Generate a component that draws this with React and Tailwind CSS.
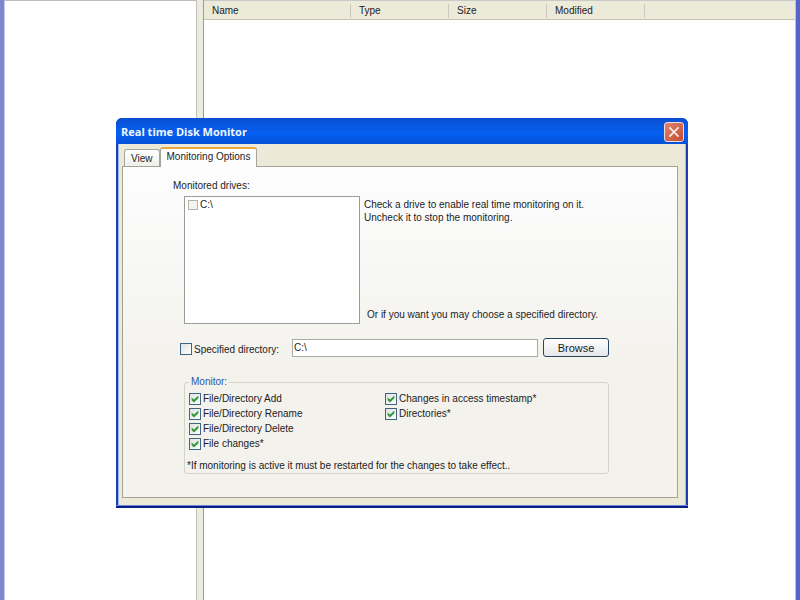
import { useState } from 'react';
import clsx from 'clsx';

const COLUMNS = ['Name', 'Type', 'Size', 'Modified'];

const TABS = ['View', 'Monitoring Options'];

const EVENTS = [
  ['File/Directory Add', 'File/Directory Rename', 'File/Directory Delete', 'File changes*'],
  ['Changes in access timestamp*', 'Directories*'],
];

function CheckBox({ label, flat, defaultChecked }) {
  return (
    <label className="flex h-[15px] items-center gap-[2px] whitespace-nowrap">
      <span className="grid shrink-0">
        <input
          type="checkbox"
          defaultChecked={defaultChecked}
          className={clsx(
            'peer col-start-1 row-start-1 appearance-none border',
            flat
              ? 'size-[10px] border-[#b5b5ad] bg-[#f4f4f0]'
              : 'size-3 border-[#3f6680] bg-linear-to-br from-[#dfe3e0] to-white'
          )}
        />
        {!flat && (
          <svg viewBox="0 0 12 12" className="pointer-events-none invisible col-start-1 row-start-1 size-3 peer-checked:visible">
            <path d="M2.6 4.4 L5 6.6 L9.4 2.4 L9.4 5.2 L5 9.6 L2.6 7.2 Z" fill="#359a3c" />
          </svg>
        )}
      </span>
      {label}
    </label>
  );
}

function FileBrowser() {
  return (
    <div className="flex min-h-screen border-l-4 border-r-4 border-l-[#7f86cf] border-r-[#5563cb] bg-white">
      <div className="w-[192px] shrink-0 border-t border-l border-t-[#bcbcbc] border-l-[#c8cef0]" />
      <div className="w-2 shrink-0 border-x border-l-[#c3c4b6] border-r-[#9a9a96] bg-[#ebebdf]" />
      <div className="min-w-0 flex-1 border-r border-r-[#b6c0ea]">
        <table className="w-full table-fixed border-collapse">
          <thead>
            <tr className="h-[19px] border-t border-b border-t-[#c9cac6] border-b-[#c4c2b2] bg-[#ecead9]">
              {COLUMNS.map(col => (
                <th key={col} className="w-[98px] p-0 pt-px text-left font-normal first:w-[147px]">
                  <div className="border-r border-r-[#cbc9b9] pl-2 leading-[14px]">{col}</div>
                </th>
              ))}
              <td />
            </tr>
          </thead>
        </table>
      </div>
    </div>
  );
}

function TitleBar() {
  return (
    <div className="flex h-[26px] items-center justify-between rounded-t-md bg-linear-to-b from-[#0a4fd0] via-[#0560f2] via-60% to-[#0450d8] pt-[2px] pr-1 pl-[5px]">
      <h1 className="font-['Open_Sans',sans-serif] text-[11px] font-bold text-[#f1f5fd]">Real time Disk Monitor</h1>
      <button
        aria-label="Close"
        className="flex size-5 items-center justify-center rounded-[3px] border border-[#f3d9d8] bg-linear-to-br from-[#dd8872] to-[#c4482c]"
      >
        <svg viewBox="0 0 12 12" className="size-3">
          <path d="M2 2 L10 10 M10 2 L2 10" stroke="#fdf3ee" strokeWidth="1.7" strokeLinecap="square" />
        </svg>
      </button>
    </div>
  );
}

function MonitoringOptions() {
  return (
    <div className="pt-3 pr-[68px] pb-[23px] pl-[50px]">
      <h2 className="leading-[13px]">Monitored drives:</h2>
      <div className="mt-[4px] flex gap-1 pl-[11px]">
        <div className="h-[128px] w-[176px] shrink-0 border border-[#9a9c9c] bg-white pl-[3px]">
          <CheckBox label="C:\" flat />
        </div>
        <div className="flex flex-1 flex-col justify-between pt-[2px] pb-[3px] leading-[13px] whitespace-nowrap">
          <p>
            Check a drive to enable real time monitoring on it.
            <br />
            Uncheck it to stop the monitoring.
          </p>
          <p className="pl-[3px]">Or if you want you may choose a specified directory.</p>
        </div>
      </div>

      <div className="mt-[14px] flex items-center pl-[7px]">
        <div className="w-[112px] shrink-0 pt-[3px]">
          <CheckBox label="Specified directory:" />
        </div>
        <input
          type="text"
          defaultValue="C:\"
          aria-label="Directory path"
          className="h-[18px] min-w-0 flex-1 border border-[#a9aaa4] bg-white px-px"
        />
        <button className="ml-[5px] h-[19px] w-[66px] rounded-[3px] border border-[#2b4560] bg-linear-to-b from-white to-[#e4e6ea] text-[11px] leading-[14px]">
          Browse
        </button>
      </div>

      <fieldset className="mt-[18px] ml-[11px] rounded-[3px] border border-[#d3d3c8] pr-1 pb-px pl-1">
        <legend className="px-[2px] leading-[14px] text-[#2c55a8]">Monitor:</legend>
        <div className="flex pt-[2px]">
          {EVENTS.map((group, i) => (
            <div key={i} className="w-[196px]">
              {group.map(name => (
                <CheckBox key={name} label={name} defaultChecked />
              ))}
            </div>
          ))}
        </div>
        <p className="mt-2 -ml-[2px] leading-[13px]">*If monitoring is active it must be restarted for the changes to take effect..</p>
      </fieldset>
    </div>
  );
}

function MonitorDialog() {
  const [tab, setTab] = useState('Monitoring Options');

  return (
    <div role="dialog" aria-label="Real time Disk Monitor" className="absolute top-[118px] left-[116px] w-[572px] rounded-t-md bg-[#1c3fb4]">
      <TitleBar />
      <div className="mx-[2px] border-x border-x-[#9db8ee] bg-[#ece9d8] pt-[3px] pr-[7px] pb-[7px] pl-[3px]">
        <div role="tablist" className="flex items-end pl-[2px]">
          {TABS.map(name => (
            <button
              key={name}
              role="tab"
              aria-selected={tab === name}
              onClick={() => setTab(name)}
              className={clsx(
                'rounded-t-[3px] border border-b-0 border-[#a3a69c] px-[6px]',
                tab === name
                  ? 'relative -mb-px h-5 border-t-2 border-t-[#eda63c] bg-[#fdfdfd] pb-[3px]'
                  : 'h-[17px] bg-linear-to-b from-white to-[#f0f0ea]'
              )}
            >
              {name}
            </button>
          ))}
        </div>
        <div className="min-h-[332px] border border-[#a3a398] bg-linear-to-b from-[#fdfdfe] to-[#f3f2ed] to-60%">
          {tab === 'Monitoring Options' && <MonitoringOptions />}
        </div>
      </div>
      <div className="h-[3px] border-t border-t-[#6b86d8] bg-[#0a1f86]" />
    </div>
  );
}

export default function App() {
  return (
    <div className="relative min-h-screen bg-white font-['Liberation_Sans',Arial,sans-serif] text-[10px] text-[#1c1c1c]">
      <FileBrowser />
      <MonitorDialog />
    </div>
  );
}
